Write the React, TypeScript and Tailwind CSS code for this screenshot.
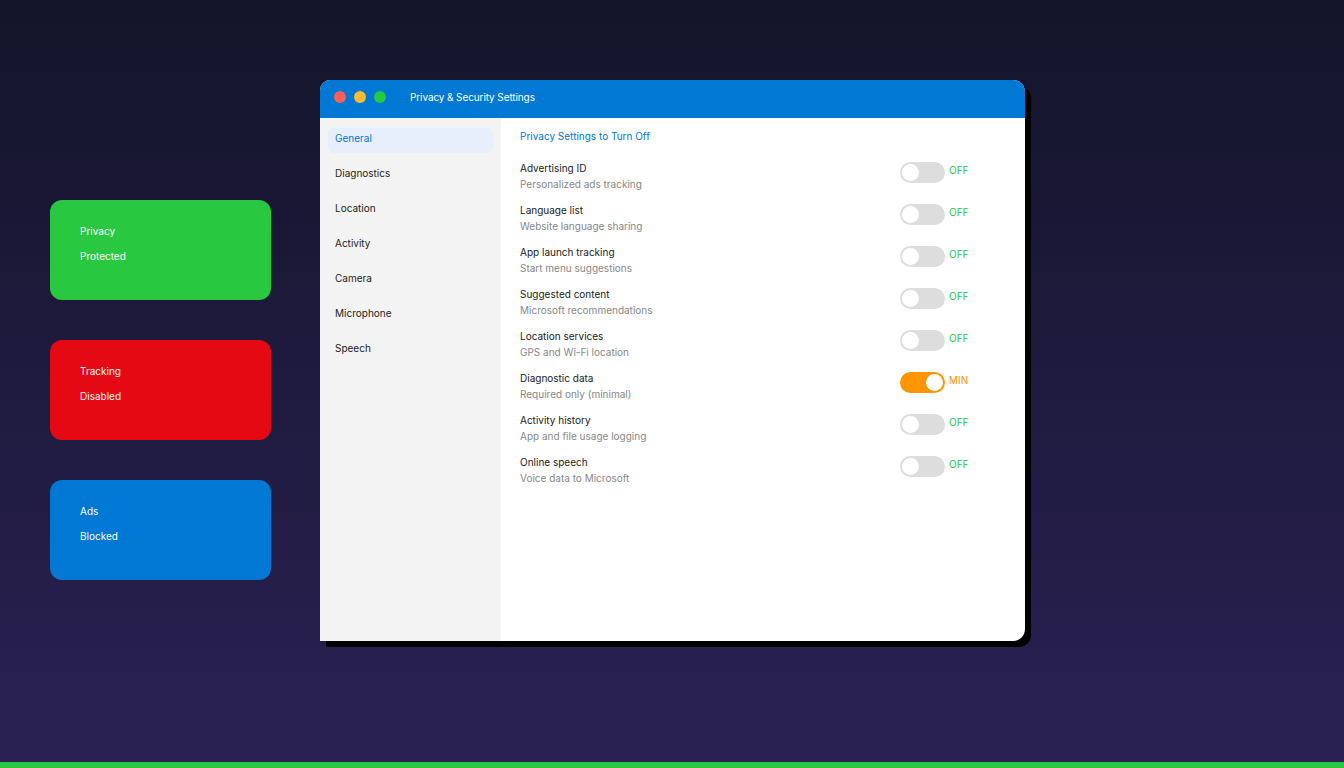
import { useState } from "react";

const sections = ["General", "Diagnostics", "Location", "Activity", "Camera", "Microphone", "Speech"];

const settings = [
  { title: "Advertising ID", desc: "Personalized ads tracking", on: false },
  { title: "Language list", desc: "Website language sharing", on: false },
  { title: "App launch tracking", desc: "Start menu suggestions", on: false },
  { title: "Suggested content", desc: "Microsoft recommendations", on: false },
  { title: "Location services", desc: "GPS and Wi-Fi location", on: false },
  { title: "Diagnostic data", desc: "Required only (minimal)", on: true },
  { title: "Activity history", desc: "App and file usage logging", on: false },
  { title: "Online speech", desc: "Voice data to Microsoft", on: false },
];

const cards = [
  { label: "Privacy", status: "Protected", bg: "bg-[#28c840]" },
  { label: "Tracking", status: "Disabled", bg: "bg-[#e50914]" },
  { label: "Ads", status: "Blocked", bg: "bg-[#0078d4]" },
];

function Toggle({ on }: { on: boolean }) {
  return (
    <div
      className={`w-[45px] h-[21px] rounded-full p-[2px] flex ${
        on ? "bg-[#ff9500] justify-end" : "bg-[#dddddd] justify-start"
      }`}
    >
      <div className="w-[17px] h-[17px] rounded-full bg-white" />
    </div>
  );
}

export default function App() {
  const [active] = useState("General");

  return (
    <div
      className="relative w-full h-[768px] overflow-hidden bg-gradient-to-b from-[#14142a] to-[#2a2154]"
      style={{ fontFamily: "Inter, 'Noto Sans', sans-serif" }}
    >
      <div className="flex items-start pl-[50px] pt-[80px]">
        <div className="flex flex-col gap-[40px] mt-[120px]">
          {cards.map((c) => (
            <div key={c.label} className={`w-[221px] h-[100px] rounded-[12px] ${c.bg} pl-[30px] pt-[24px] text-white text-[10px]`}>
              <div className="leading-[14px]">{c.label}</div>
              <div className="leading-[14px] mt-[11px]">{c.status}</div>
            </div>
          ))}
        </div>

        <div className="ml-[49px] w-[705px] h-[561px] flex flex-col rounded-tl-[10px] rounded-tr-[12px] rounded-br-[12px] bg-white shadow-[6px_6px_0_#000] overflow-hidden">
          <div className="h-[38px] bg-[#0078d4] flex items-center pl-[14px] pb-[4px] shrink-0">
            <div className="flex gap-[8px]">
              <span className="w-[12px] h-[12px] rounded-full bg-[#ff5f57]" />
              <span className="w-[12px] h-[12px] rounded-full bg-[#febc2e]" />
              <span className="w-[12px] h-[12px] rounded-full bg-[#28c840]" />
            </div>
            <span className="ml-[24px] text-white text-[10px] tracking-[-0.1px]">Privacy &amp; Security Settings</span>
          </div>

          <div className="flex flex-1">
            <div className="w-[181px] bg-[#f3f3f3] px-[8px] pt-[10px] flex flex-col gap-[10px]">
              {sections.map((s) => (
                <div
                  key={s}
                  className={`h-[25px] flex items-start pt-[3px] px-[7px] rounded-[6px] text-[10px] leading-[14px] ${
                    s === active ? "bg-[#e6effb] text-[#0078d4]" : "text-[#222]"
                  }`}
                >
                  {s}
                </div>
              ))}
            </div>

            <div className="flex-1 pl-[19px] pr-[20px] pt-[10px]">
              <div className="text-[10px] leading-[16px] text-[#0078d4]">Privacy Settings to Turn Off</div>
              <div className="mt-[16px] flex flex-col gap-[10px]">
                {settings.map((s) => (
                  <div key={s.title} className="flex justify-between items-start">
                    <div>
                      <div className="text-[10px] leading-[16px] text-[#222]">{s.title}</div>
                      <div className="text-[10px] leading-[16px] text-[#888]">{s.desc}</div>
                    </div>
                    <div className="flex items-start gap-[4px] mt-[2px] mr-[36px]">
                      <Toggle on={s.on} />
                      <span className={`w-[20px] text-[10px] leading-[16px] ${s.on ? "text-[#ff9500]" : "text-[#28c840]"}`}>
                        {s.on ? "MIN" : "OFF"}
                      </span>
                    </div>
                  </div>
                ))}
              </div>
            </div>
          </div>
        </div>
      </div>

      <div className="absolute bottom-0 left-0 right-0 h-[6px] bg-[#28c840]" />
    </div>
  );
}
